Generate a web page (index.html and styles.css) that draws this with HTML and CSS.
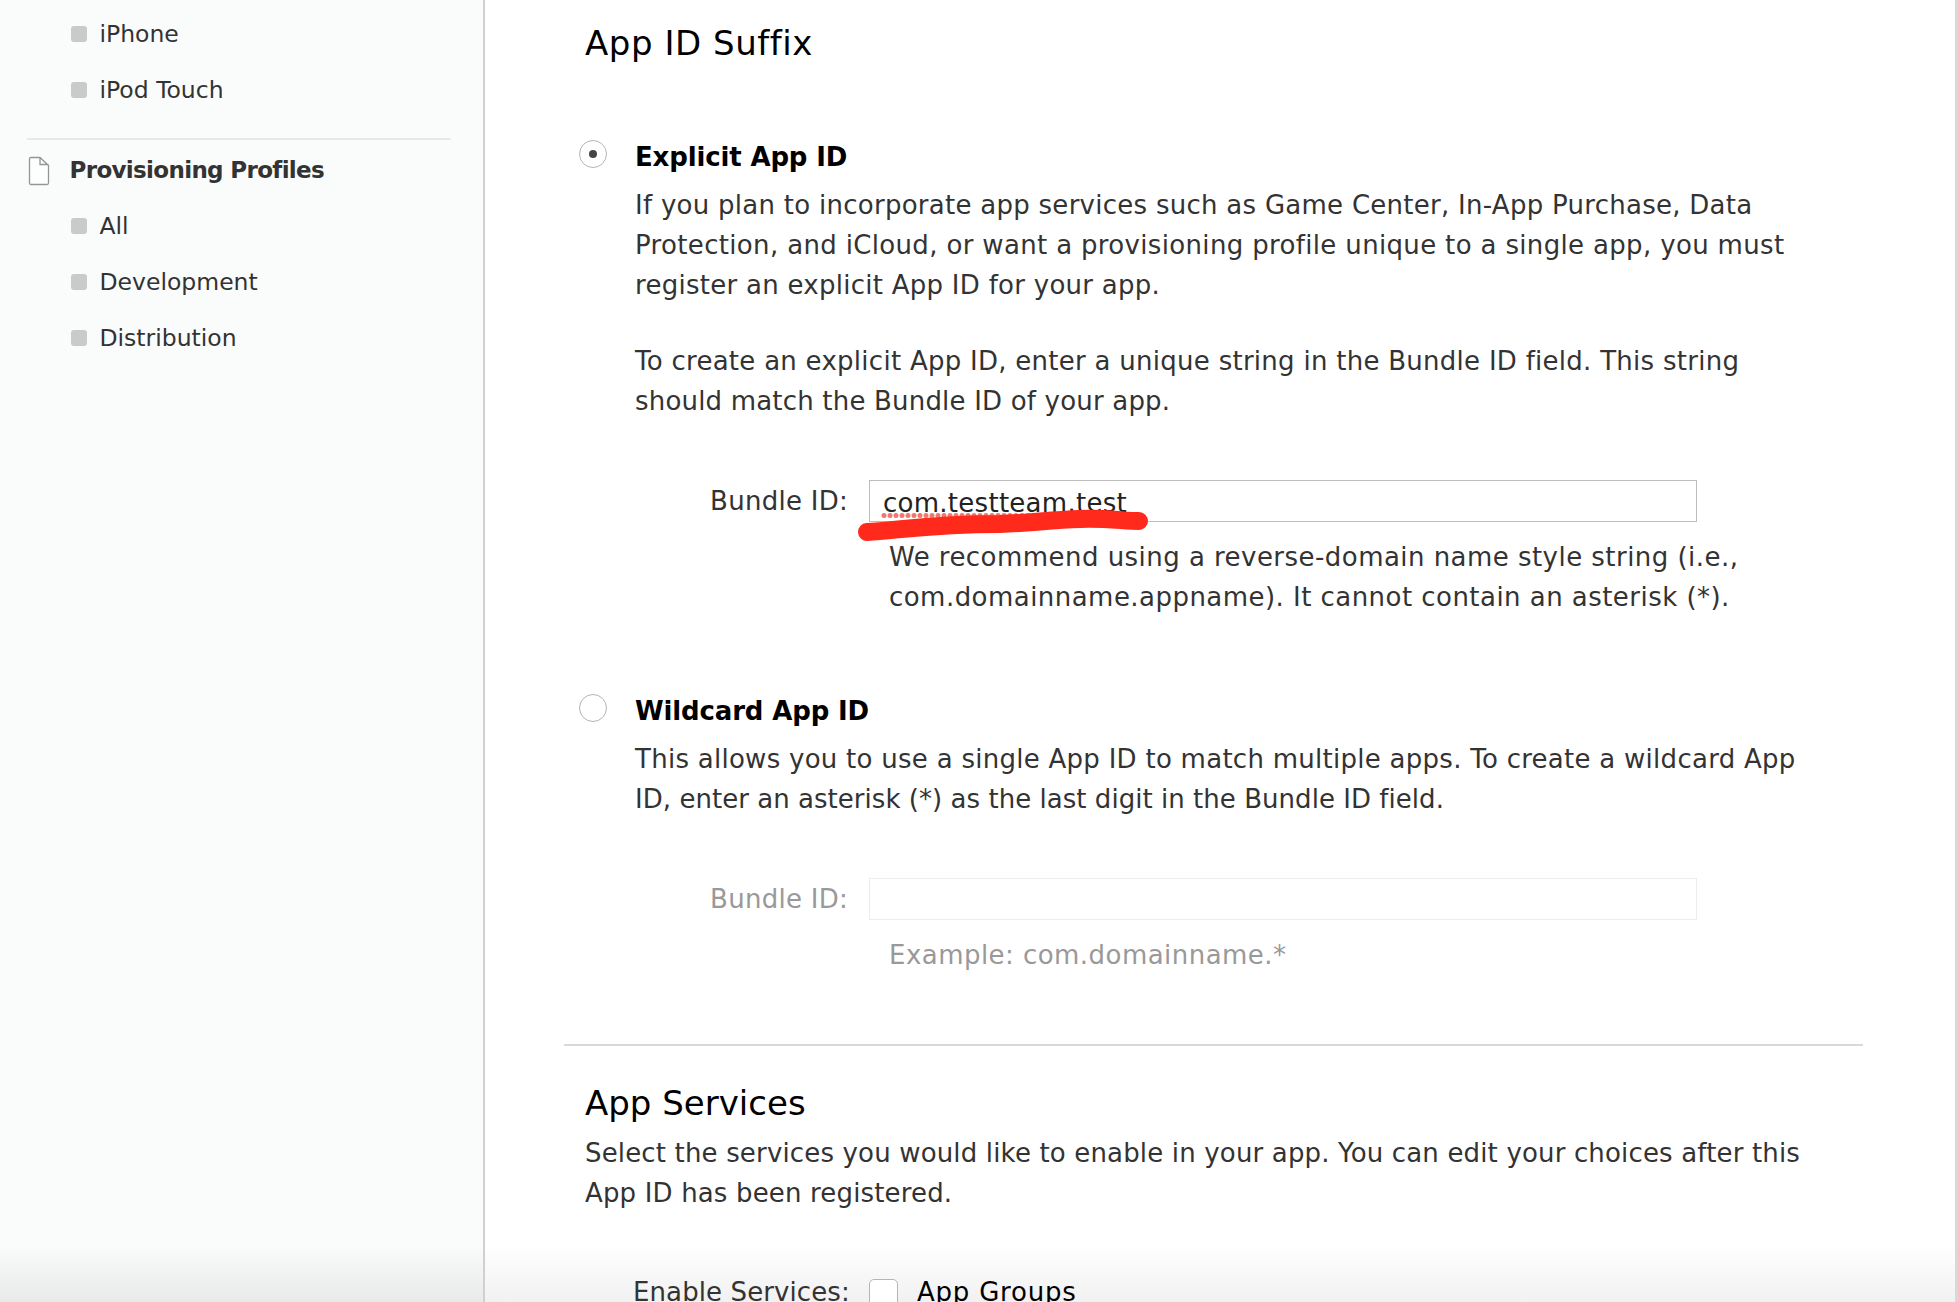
FILE: index.html
```html
<!DOCTYPE html>
<html lang="en">
<head>
<meta charset="utf-8">
<title>Register App ID</title>
<link rel="stylesheet" href="styles.css">
</head>
<body>
<div class="page">
  <aside class="sidebar">
    <ul class="nav-list">
      <li class="nav-item"><span class="bullet"></span>iPhone</li>
      <li class="nav-item"><span class="bullet"></span>iPod Touch</li>
    </ul>
    <div class="nav-divider"></div>
    <div class="nav-head">
      <svg class="doc-icon" width="24" height="32" viewBox="0 0 24 32"><path d="M2.500 5a1.500 1.500 0 0 1 1.500-1.500H13L21.500 11.500V29a1.500 1.500 0 0 1-1.500 1.500H4A1.500 1.500 0 0 1 2.500 29Z M13 3.500V10.500H21.500" fill="#fdfefe" stroke="#949696" stroke-width="1.300"/></svg>
      <span>Provisioning Profiles</span>
    </div>
    <ul class="nav-list">
      <li class="nav-item"><span class="bullet"></span>All</li>
      <li class="nav-item"><span class="bullet"></span>Development</li>
      <li class="nav-item"><span class="bullet"></span>Distribution</li>
    </ul>
  </aside>
  <main class="main">
    <h2 class="section-title suffix-title">App ID Suffix</h2>
    <section class="option">
      <span class="radio radio-on"></span>
      <div>
        <h3 class="option-title">Explicit App ID</h3>
        <p class="copy">If you plan to incorporate app services such as Game Center, In-App Purchase, Data<br><span class="wide">Protection, and iCloud, or want a provisioning profile unique to a single app, you must</span><br>register an explicit App ID for your app.</p>
        <p class="copy copy-gap">To create an explicit App ID, enter a unique string in the Bundle ID field. This string<br><span class="tight">should match the Bundle ID of your app.</span></p>
        <div class="field">
          <span class="field-label">Bundle ID:</span>
          <div class="field-box"><span class="field-value">com.testteam.test</span></div>
        </div>
        <p class="copy help">We recommend using a reverse-domain name style string (i.e.,<br>com.domainname.appname). It cannot contain an asterisk (*).</p>
      </div>
    </section>
    <section class="option">
      <span class="radio"></span>
      <div>
        <h3 class="option-title">Wildcard App ID</h3>
        <p class="copy">This allows you to use a single App ID to match multiple apps. To create a wildcard App<br><span class="tightest">ID, enter an asterisk (*) as the last digit in the Bundle ID field.</span></p>
        <div class="field field-off">
          <span class="field-label">Bundle ID:</span>
          <div class="field-box"></div>
        </div>
        <p class="copy help help-off">Example: com.domainname.*</p>
      </div>
    </section>
    <hr class="rule">
    <h2 class="section-title services-title">App Services</h2>
    <p class="copy services-copy">Select the services you would like to enable in your app. You can edit your choices after this<br>App ID has been registered.</p>
    <div class="services-row">
      <span class="field-label">Enable Services:</span>
      <span class="checkbox"></span>
      <span class="service-name">App Groups</span>
    </div>
  </main>
</div>
<svg class="markup" width="1958" height="1302" viewBox="0 0 1958 1302" aria-hidden="true">
  <path class="squiggle" d="M884 515.500H1076"/>
  <path class="stroke" d="M867 532C900 530 935 524 1000 524C1030 523 1050 520 1080 519C1105 518 1125 521 1139 521"/>
</svg>
</body>
</html>
```
FILE: styles.css
```css
* { box-sizing: border-box; }
html, body { margin: 0; height: 100%; overflow: hidden; background: #fff; }
body { font-family: "DejaVu Sans", sans-serif; color: #333; position: relative; }
.page { display: flex; height: 1302px; overflow: hidden; }
.sidebar { width: 485px; flex: none; background: linear-gradient(to bottom, #fafcfb 1245px, #e8e9e9 1302px); border-right: 2px solid #cfd0d0; padding: 6px 32px 0 27px; }
.nav-list { list-style: none; margin: 0; padding: 0; }
.nav-item { display: flex; align-items: center; height: 56px; padding-left: 44px; font-size: 23.500px; gap: 12.500px; color: #333; }
.bullet { width: 16px; height: 16px; border-radius: 3px; background: #c9caca; flex: none; }
.nav-divider { height: 2px; background: #e8e9e9; margin-top: 20px; }
.nav-head { display: flex; align-items: center; height: 57px; margin-top: 1px; font-size: 23px; letter-spacing: -0.660px; font-weight: 700; color: #333; gap: 18.500px; }
.doc-icon { flex: none; }
.main { flex: 1; padding: 23px 92px 0 79px; background: linear-gradient(to bottom, #fff 1245px, #f1f1f1 1302px); border-right: 3px solid #d8d8d8; }
.section-title { margin: 0 0 0 21px; font-size: 34px; line-height: 40px; font-weight: 400; color: #000; }
.suffix-title { font-variant-ligatures: none; letter-spacing: 0.550px; }
.option { display: grid; grid-template-columns: 71px 1fr; margin-top: 73px; }
.radio { width: 28px; height: 28px; margin: 4px 0 0 15px; border-radius: 50%; border: 1.500px solid #b5b5b5; background: #fff; display: flex; align-items: center; justify-content: center; }
.radio-on::after { content: ""; width: 8px; height: 8px; border-radius: 50%; background: #444; }
.option-title { margin: 1px 0 0; font-size: 26px; line-height: 40px; font-weight: 700; letter-spacing: -0.150px; color: #000; }
.copy { margin: 8px 0 0; font-size: 26px; line-height: 40px; letter-spacing: 0.270px; white-space: nowrap; color: #333; }
.copy-gap { margin-top: 36px; }
.wide { letter-spacing: 0.340px; }
.tight { letter-spacing: 0.190px; }
.tightest { letter-spacing: 0.040px; }
.field { display: flex; align-items: center; margin-top: 59px; gap: 21px; }
.field-label { width: 213px; flex: none; text-align: right; font-size: 26px; line-height: 40px; letter-spacing: 0.270px; color: #333; white-space: nowrap; }
.field-box { width: 828px; height: 42px; border: 1.500px solid #bdbdbd; background: #fff; padding-left: 13px; display: flex; align-items: center; font-size: 26px; letter-spacing: 0.270px; color: #222; }
.field-value { position: relative; top: 2px; }
.help { margin: 15px 0 0 254px; letter-spacing: 0.460px; }
.field-off .field-label, .help-off { color: #999; }
.field-off .field-box { border-color: #ececec; }
.rule { margin: 69px 0 0; border: 0; height: 2px; background: #d8dad9; }
.services-title { margin-top: 37px; }
.services-copy { margin: 10px 0 0 21px; letter-spacing: 0.160px; }
.services-row { display: flex; align-items: flex-start; margin: 66px 0 0 69px; gap: 21px; }
.services-row .field-label { width: 215px; line-height: 26px; letter-spacing: 0.100px; }
.checkbox { width: 29px; height: 29px; border: 1.500px solid #b5b5b5; border-radius: 5px; background: #fff; flex: none; }
.service-name { font-size: 26px; line-height: 26px; letter-spacing: 0.780px; color: #000; margin-left: -2px; }
.markup { position: absolute; left: 0; top: 0; pointer-events: none; }
.squiggle { fill: none; stroke: #f0776c; stroke-width: 5; stroke-linecap: round; stroke-dasharray: 0 6; }
.stroke { fill: none; stroke: #ff2a1c; stroke-width: 18; stroke-linecap: round; stroke-linejoin: round; }
```
